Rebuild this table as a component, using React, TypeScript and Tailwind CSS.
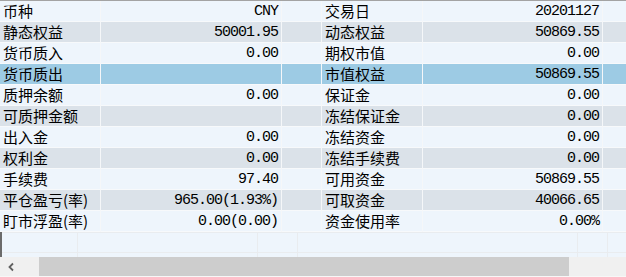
import React from "react";

type Row = { l1: string; v1: string; l2: string; v2: string };

const rows: Row[] = [
  { l1: "币种", v1: "CNY", l2: "交易日", v2: "20201127" },
  { l1: "静态权益", v1: "50001.95", l2: "动态权益", v2: "50869.55" },
  { l1: "货币质入", v1: "0.00", l2: "期权市值", v2: "0.00" },
  { l1: "货币质出", v1: "", l2: "市值权益", v2: "50869.55" },
  { l1: "质押余额", v1: "0.00", l2: "保证金", v2: "0.00" },
  { l1: "可质押金额", v1: "", l2: "冻结保证金", v2: "0.00" },
  { l1: "出入金", v1: "0.00", l2: "冻结资金", v2: "0.00" },
  { l1: "权利金", v1: "0.00", l2: "冻结手续费", v2: "0.00" },
  { l1: "手续费", v1: "97.40", l2: "可用资金", v2: "50869.55" },
  { l1: "平仓盈亏(率)", v1: "965.00(1.93%)", l2: "可取资金", v2: "40066.65" },
  { l1: "盯市浮盈(率)", v1: "0.00(0.00)", l2: "资金使用率", v2: "0.00%" },
];

const cjk = { fontFamily: '"Noto Sans CJK SC", "Noto Sans", sans-serif' };
const mono = { fontFamily: '"Liberation Mono", "DejaVu Sans Mono", monospace' };

export default function App() {
  return (
    <div className="w-[626px] h-[277px] overflow-hidden bg-[#eef5fc] text-black flex flex-col border-t border-[#a3a3a3]">
      {rows.map((r, i) => {
        const bg =
          i === 3 ? "bg-[#9dcbe4]" : i % 2 === 1 ? "bg-[#dbe2e9]" : "bg-[#eef5fc]";
        return (
          <div
            key={i}
            className={`grid grid-cols-[101px_181px_40px_101px_180px_1fr] h-[21px] border-b border-[#f7f9fb] ${bg}`}
          >
            <div className="border-r border-[#f5f7f9] pl-[3px] text-[15px] leading-[20px] whitespace-nowrap" style={cjk}>
              {r.l1}
            </div>
            <div className="border-r border-[#f5f7f9] pr-[3px] text-right text-[15px] tracking-[-1px] leading-[21px] whitespace-nowrap" style={mono}>
              {r.v1}
            </div>
            <div className="border-r border-[#f5f7f9]" />
            <div className="border-r border-[#f5f7f9] pl-[3px] text-[15px] leading-[20px] whitespace-nowrap" style={cjk}>
              {r.l2}
            </div>
            <div className="border-r border-[#f5f7f9] pr-[3px] text-right text-[15px] tracking-[-1px] leading-[21px] whitespace-nowrap" style={mono}>
              {r.v2}
            </div>
            <div />
          </div>
        );
      })}
      <div className="h-[25px] border-l-2 border-[#6b6b6b] flex flex-col">
        <div className="grid grid-cols-[76px_180px_40px_280px_30px_1fr] h-[21px] border-t border-b border-[#e9ecef]">
          <div className="border-r border-[#e9ecef]" />
          <div className="border-r border-[#e9ecef]" />
          <div className="border-r border-[#e9ecef]" />
          <div className="border-r border-[#e9ecef]" />
          <div className="border-r border-[#e9ecef]" />
          <div />
        </div>
        <div className="grid grid-cols-[76px_180px_40px_280px_30px_1fr] flex-1">
          <div className="border-r border-[#e9ecef]" />
          <div className="border-r border-[#e9ecef]" />
          <div className="border-r border-[#e9ecef]" />
          <div className="border-r border-[#e9ecef]" />
          <div className="border-r border-[#e9ecef]" />
          <div />
        </div>
      </div>
      <div className="h-[20px] flex bg-[#f0f0f0] border-b border-[#f7f7f7]">
        <div className="w-[39px] flex items-center pl-[7px]">
          <svg width="8" height="10" viewBox="0 0 8 10">
            <polyline points="6,1.5 2.5,5 6,8.5" fill="none" stroke="#606060" strokeWidth="1.8" />
          </svg>
        </div>
        <div className="w-[530px] bg-[#cdcdcd]" />
        <div className="flex-1" />
      </div>
    </div>
  );
}
